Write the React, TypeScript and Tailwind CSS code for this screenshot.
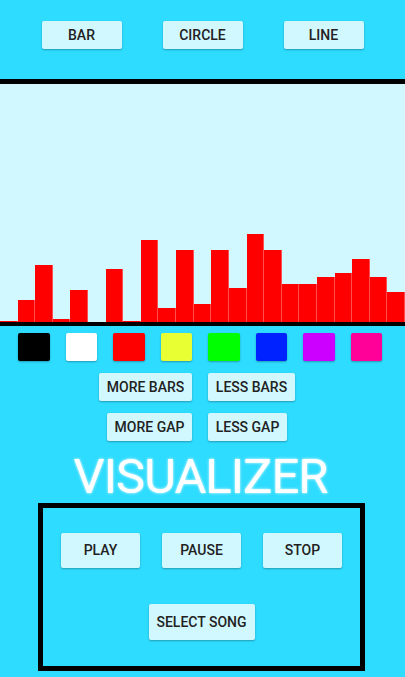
const bars = [1, 22.5, 57, 3, 32, 0.5, 53.5, 1, 82, 14.5, 72.5, 18.5, 72.5, 34, 88, 72.5, 38, 38, 45, 49, 63, 45, 30];

const swatches = ['#000000', '#ffffff', '#ff0000', '#e8ff33', '#00ff00', '#0022ff', '#cc00ff', '#ff0099'];

function Btn({ label, className = '' }: { label: string; className?: string }) {
  return (
    <button
      className={`flex items-center justify-center whitespace-nowrap rounded-[2px] bg-[#d2f8ff] px-0 text-[14px] font-medium uppercase text-[#222] shadow-[0_1px_2px_rgba(0,0,0,0.3)] ${className}`}
    >
      {label}
    </button>
  );
}

export default function App() {
  return (
    <div className="flex h-[677px] w-full flex-col overflow-hidden bg-[#2edcff] font-['Roboto',sans-serif]">
      <div className="flex h-[79px] justify-center gap-[41px] pt-[21px]">
        <Btn label="Bar" className="h-[28px] w-[80px]" />
        <Btn label="Circle" className="h-[28px] w-[80px]" />
        <Btn label="Line" className="h-[28px] w-[80px]" />
      </div>
      <div className="h-[5px] bg-black" />
      <div className="flex h-[238px] items-end bg-[#d2f8ff]">
        {bars.map((h, i) => (
          <div
            key={i}
            className="flex-1 bg-[#ff0000] shadow-[inset_-1px_0_0_rgba(255,255,255,0.3)]"
            style={{ height: h }}
          />
        ))}
      </div>
      <div className="h-[4px] bg-black" />

      <div className="mt-[7px] flex gap-[16px] pl-[18px]">
        {swatches.map((c) => (
          <div
            key={c}
            className="h-[28px] w-[31.5px] rounded-[2px] shadow-[0_1px_2px_rgba(0,0,0,0.3)]"
            style={{ backgroundColor: c }}
          />
        ))}
      </div>

      <div className="mt-[12px] flex justify-center gap-[16px] pr-[11px]">
        <Btn label="More bars" className="h-[28px] w-[93px]" />
        <Btn label="Less bars" className="h-[28px] w-[87px]" />
      </div>
      <div className="mt-[12px] flex justify-center gap-[16px] pr-[11px]">
        <Btn label="More gap" className="h-[28px] w-[85px]" />
        <Btn label="Less gap" className="h-[28px] w-[79px]" />
      </div>

      <h1 className="mt-[11px] pr-[4px] text-center text-[49px] leading-[50px] font-normal tracking-[-1px] text-white [text-shadow:0_0_3px_#ffffff]">
        VISUALIZER
      </h1>

      <div className="ml-[38px] mt-[1px] flex h-[168px] w-[327px] flex-col items-center border-[5px] border-black pt-[25px]">
        <div className="flex gap-[22px]">
          <Btn label="Play" className="h-[35px] w-[79px]" />
          <Btn label="Pause" className="h-[35px] w-[79px]" />
          <Btn label="Stop" className="h-[35px] w-[79px]" />
        </div>
        <Btn label="Select song" className="mt-[36px] h-[36px] w-[106px]" />
      </div>
    </div>
  );
}
